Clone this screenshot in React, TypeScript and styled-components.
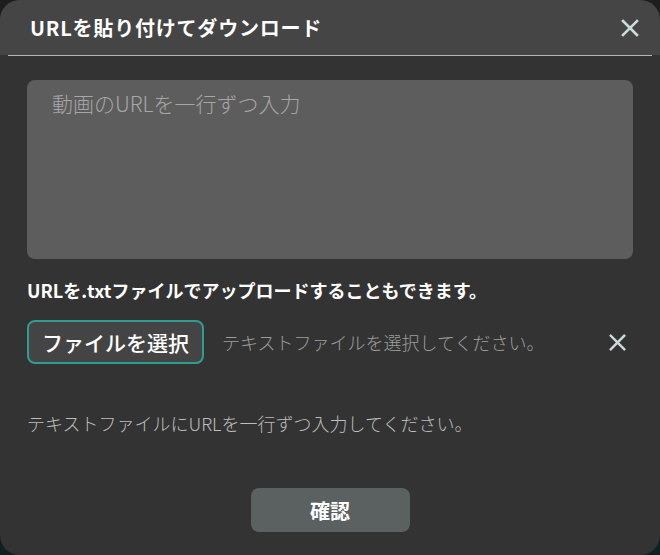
import React from "react";
import styled, { createGlobalStyle } from "styled-components";

const GlobalStyle = createGlobalStyle`
  html, body {
    margin: 0;
    padding: 0;
    background: linear-gradient(180deg, #1e1e1e 0%, #102020 100%);
  }
  body {
    font-family: "Noto Sans CJK JP", "Noto Sans", sans-serif;
  }
  * { box-sizing: border-box; }
`;

const Modal = styled.div`
  width: 660px;
  height: 555px;
  background: #333333;
  border-radius: 20px;
  overflow: hidden;
  display: flex;
  flex-direction: column;
`;

const Header = styled.header`
  height: 55px;
  background: #454545;
  display: flex;
  align-items: center;
  justify-content: space-between;
  padding: 0 18px 0 30px;
`;

const Title = styled.h1`
  margin: 0;
  font-size: 20px;
  font-weight: 700;
  letter-spacing: 0.8px;
  color: #ffffff;
`;

const IconButton = styled.button`
  background: none;
  border: none;
  padding: 0;
  width: 24px;
  height: 24px;
  display: flex;
  align-items: center;
  justify-content: center;
  cursor: pointer;
`;

const Divider = styled.div`
  height: 1px;
  background: #b4b4b4;
  margin: 0 8px;
`;

const Body = styled.div`
  flex: 1;
  display: flex;
  flex-direction: column;
  padding: 24px 27px 0;
`;

const UrlInput = styled.textarea`
  height: 179px;
  width: 100%;
  resize: none;
  border: none;
  outline: none;
  border-radius: 8px;
  background: #5d5d5d;
  padding: 8px 25px;
  font-family: "Noto Sans CJK JP", "Noto Sans", sans-serif;
  font-size: 21px;
  font-weight: 300;
  color: #e0e0e0;
  &::placeholder {
    color: #a6a6a6;
  }
`;

const Info = styled.p`
  margin: 19px 0 0;
  font-size: 18px;
  line-height: 24px;
  font-weight: 700;
  color: #ffffff;
`;

const FileRow = styled.div`
  margin-top: 18px;
  display: flex;
  align-items: center;
`;

const FileButton = styled.button`
  width: 177px;
  height: 44px;
  border: 2px solid #2e9e92;
  border-radius: 8px;
  background: #444444;
  color: #ffffff;
  font-family: "Noto Sans CJK JP", "Noto Sans", sans-serif;
  font-size: 21px;
  font-weight: 500;
  padding: 0;
  cursor: pointer;
`;

const FileName = styled.span`
  margin-left: 18px;
  font-size: 18px;
  font-weight: 300;
  color: #9c9c9c;
`;

const ClearButton = styled(IconButton)`
  margin-left: auto;
  margin-right: 4px;
`;

const Note = styled.p`
  margin: 47px 0 0;
  font-size: 18px;
  line-height: 24px;
  font-weight: 300;
  color: #bdbdbd;
`;

const Footer = styled.div`
  margin-top: 53px;
  display: flex;
  justify-content: center;
`;

const ConfirmButton = styled.button`
  width: 159px;
  height: 44px;
  border: none;
  border-radius: 8px;
  background: #5b6060;
  color: #ffffff;
  font-family: "Noto Sans CJK JP", "Noto Sans", sans-serif;
  font-size: 20px;
  font-weight: 700;
  cursor: pointer;
`;

const CloseIcon: React.FC<{ size: number }> = ({ size }) => (
  <svg width={size} height={size} viewBox="0 0 20 20" fill="none">
    <path
      d="M3 3L17 17M17 3L3 17"
      stroke="#c9dcd8"
      strokeWidth="2.6"
      strokeLinecap="square"
    />
  </svg>
);

export default function App() {
  return (
    <>
      <GlobalStyle />
      <Modal>
        <Header>
          <Title>URLを貼り付けてダウンロード</Title>
          <IconButton aria-label="閉じる">
            <CloseIcon size={20} />
          </IconButton>
        </Header>
        <Divider />
        <Body>
          <UrlInput placeholder="動画のURLを一行ずつ入力" />
          <Info>URLを.txtファイルでアップロードすることもできます。</Info>
          <FileRow>
            <FileButton>ファイルを選択</FileButton>
            <FileName>テキストファイルを選択してください。</FileName>
            <ClearButton aria-label="クリア">
              <CloseIcon size={19} />
            </ClearButton>
          </FileRow>
          <Note>テキストファイルにURLを一行ずつ入力してください。</Note>
          <Footer>
            <ConfirmButton>確認</ConfirmButton>
          </Footer>
        </Body>
      </Modal>
    </>
  );
}
